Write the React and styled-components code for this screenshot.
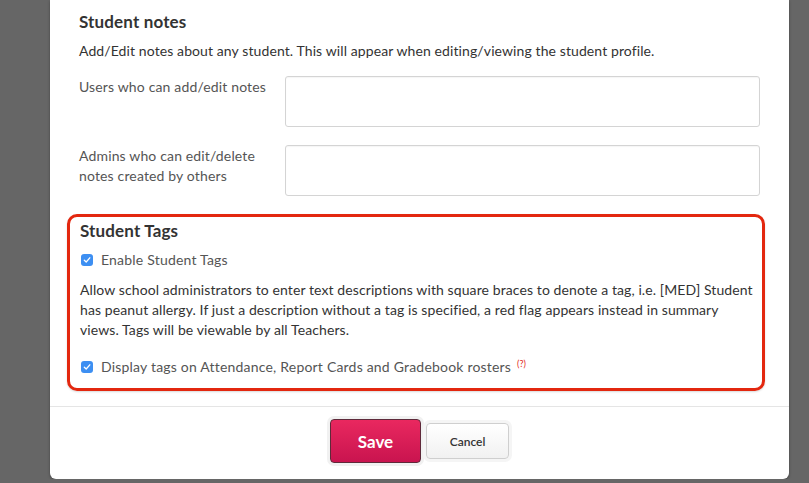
import React from "react";
import styled, { createGlobalStyle } from "styled-components";

const Global = createGlobalStyle`
  html, body { margin: 0; padding: 0; background: #666666; }
  body { font-family: Lato, "Open Sans", sans-serif; color: #333; }
  * { box-sizing: border-box; }
`;

const Modal = styled.div`
  margin-left: 50px;
  width: 739px;
  background: #fff;
  border-radius: 0 0 6px 6px;
  box-shadow: 0 1px 3px rgba(0,0,0,0.35);
`;

const Body = styled.div`
  padding: 12px 29px 15px 29px;
`;

const Heading = styled.h3`
  margin: 0;
  font-size: 17px;
  line-height: 20px;
  font-weight: 700;
  letter-spacing: 0.15px;
  color: #333;
`;

const Text = styled.p`
  margin: ${p => p.$mt || 0}px 0 0 0;
  font-size: 14px;
  line-height: 20px;
  letter-spacing: 0.1px;
  color: #333;
`;

const Row = styled.div`
  display: flex;
  margin-top: ${p => p.$mt}px;
`;

const Label = styled.label`
  width: 206px;
  flex: none;
  padding-top: 1px;
  padding-right: 12px;
  font-size: 14px;
  line-height: 20px;
  letter-spacing: 0.15px;
  color: #555;
`;

const Field = styled.div`
  flex: 1;
  height: 51px;
  border: 1px solid #d4d4d4;
  border-radius: 3px;
  box-shadow: inset 0 1px 1px rgba(0,0,0,0.04);
`;

const Highlight = styled.section`
  margin: 18px -5px 0 -12px;
  border: 3px solid #e3270f;
  border-radius: 10px;
  padding: 4px 2px 11px 10px;
  box-shadow: 0 1px 2px rgba(0,0,0,0.15);
`;

const CheckRow = styled.div`
  display: flex;
  align-items: center;
  margin-top: ${p => p.$mt}px;
  font-size: 14px;
  line-height: 20px;
  letter-spacing: 0.2px;
  color: #555;
`;

const Box = styled.span`
  width: 12px;
  height: 12px;
  border-radius: 3px;
  background: #3d8ff2;
  margin-left: 1px;
  margin-right: 8px;
  display: inline-flex;
  align-items: center;
  justify-content: center;
  flex: none;
`;

const Help = styled.sup`
  color: #e3271a;
  font-size: 9px;
  letter-spacing: 0;
  margin-left: 6px;
  position: relative;
  top: -3px;
`;

const Footer = styled.div`
  border-top: 1px solid #e5e5e5;
  padding: 12px 0 16px;
  display: flex;
  justify-content: center;
  align-items: center;
  gap: 5px;
`;

const SaveBtn = styled.button`
  width: 91px;
  height: 44px;
  border: 1px solid #5e2a3a;
  border-radius: 4px;
  background: linear-gradient(#e9285f, #c9144f);
  color: #fff;
  font-family: Lato, sans-serif;
  font-weight: 700;
  font-size: 17px;
  box-shadow: 0 0 0 3px #f1f1f1;
`;

const CancelBtn = styled.button`
  width: 83px;
  height: 36px;
  border: 1px solid #cfcfcf;
  border-radius: 4px;
  background: linear-gradient(#ffffff, #f1f1f1);
  color: #333;
  font-family: Lato, sans-serif;
  font-weight: 600;
  font-size: 12px;
  box-shadow: 0 0 0 3px #f5f5f5;
`;

const Check = () => (
  <Box>
    <svg width="8" height="8" viewBox="0 0 8 8">
      <path d="M1.3 4.2 L3.2 6 L6.8 1.8" stroke="#fff" strokeWidth="1.3" fill="none" strokeLinecap="round" strokeLinejoin="round" />
    </svg>
  </Box>
);

export default function App() {
  return (
    <>
      <Global />
      <Modal>
        <Body>
          <Heading>Student notes</Heading>
          <Text $mt={9}>Add/Edit notes about any student. This will appear when editing/viewing the student profile.</Text>
          <Row $mt={15}>
            <Label>Users who can add/edit notes</Label>
            <Field />
          </Row>
          <Row $mt={18}>
            <Label>Admins who can edit/delete notes created by others</Label>
            <Field />
          </Row>
          <Highlight>
            <Heading>Student Tags</Heading>
            <CheckRow $mt={9}><Check />Enable Student Tags</CheckRow>
            <Text $mt={10}>
              Allow school administrators to enter text descriptions with square braces to denote a tag, i.e. [MED] Student<br />
              has peanut allergy. If just a description without a tag is specified, a red flag appears instead in summary<br />
              views. Tags will be viewable by all Teachers.
            </Text>
            <CheckRow $mt={17}><Check />Display tags on Attendance, Report Cards and Gradebook rosters<Help>(?)</Help></CheckRow>
          </Highlight>
        </Body>
        <Footer>
          <SaveBtn>Save</SaveBtn>
          <CancelBtn>Cancel</CancelBtn>
        </Footer>
      </Modal>
    </>
  );
}
